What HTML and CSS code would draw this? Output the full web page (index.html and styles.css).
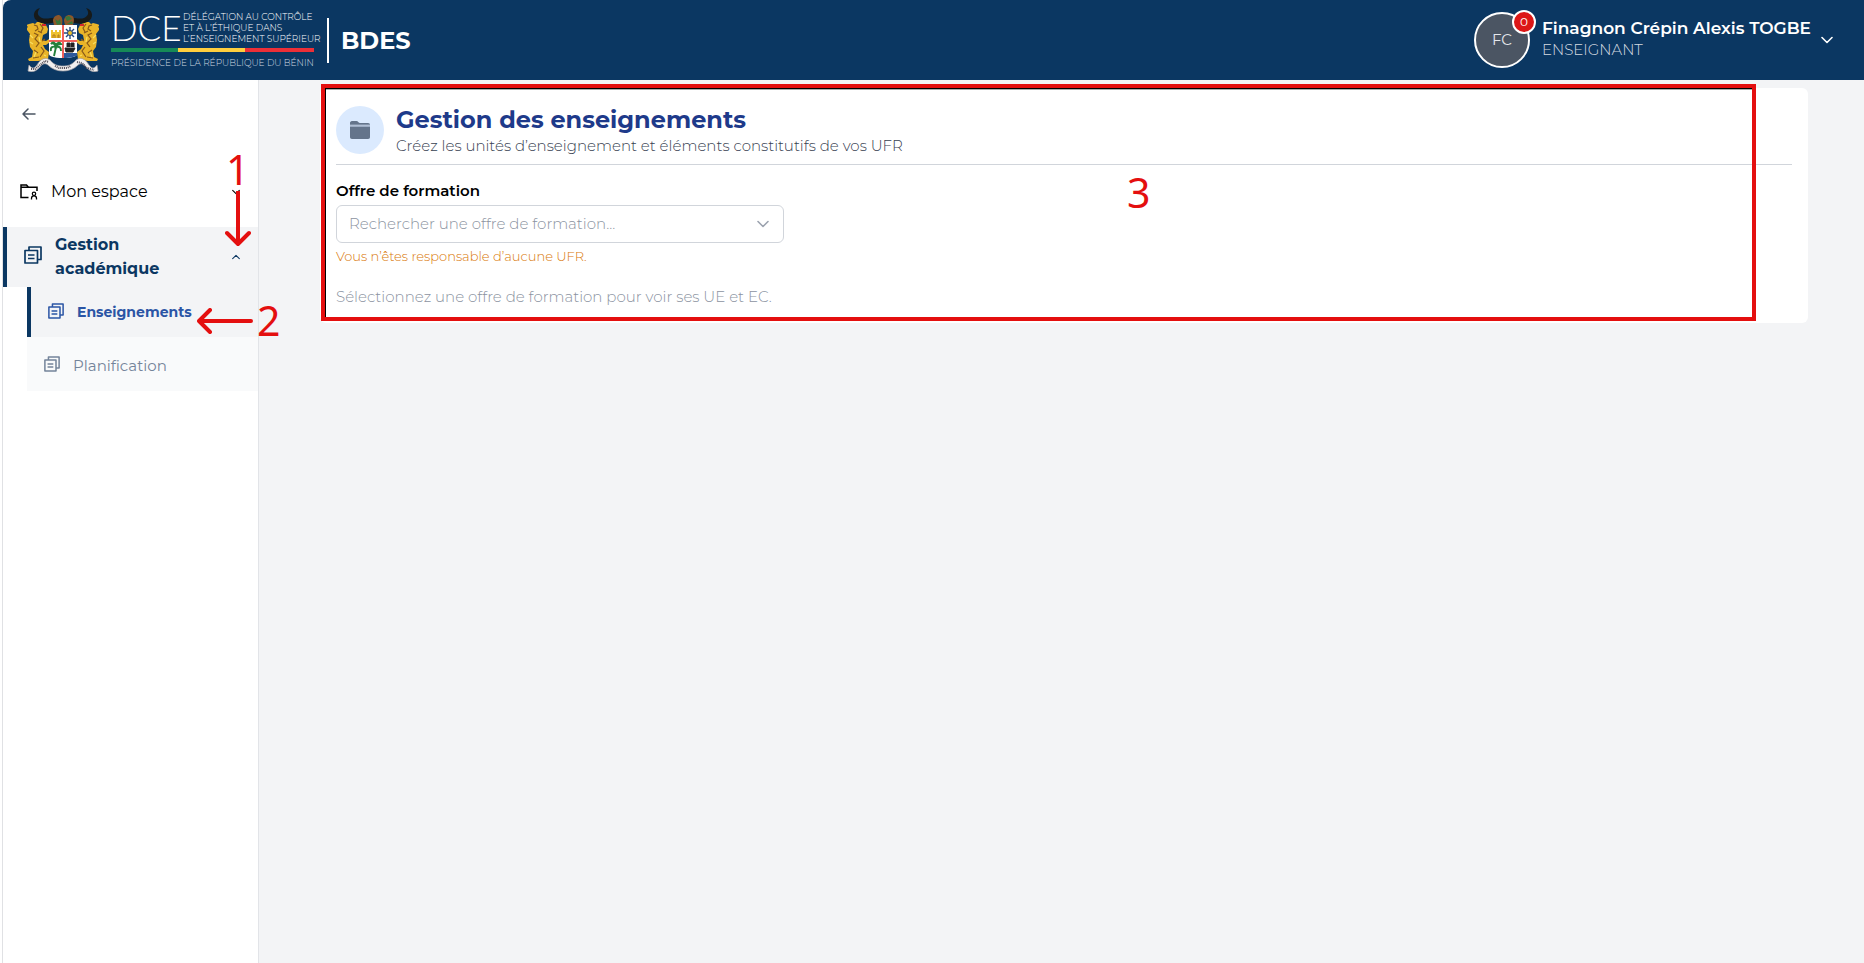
FILE: index.html
```html
<!DOCTYPE html>
<html lang="fr">
<head>
<meta charset="utf-8">
<title>BDES - Gestion des enseignements</title>
<link rel="stylesheet" href="styles.css">
</head>
<body>
<svg class="defs" width="0" height="0" aria-hidden="true">
  <defs>
    <symbol id="copies" viewBox="0 0 18 18">
      <path d="M1 4.500h12.500V17H1zM5 4V1h12v12.500h-3M4 9h6.500M4 12.500h6.500" fill="none" stroke="currentColor" stroke-width="1.700" stroke-linejoin="round"/>
    </symbol>
    <symbol id="chevron" viewBox="0 0 12 8">
      <path d="M1 1.500l5 5 5-5" fill="none" stroke="currentColor" stroke-width="1.600" stroke-linecap="round" stroke-linejoin="round"/>
    </symbol>
    <g id="lion">
      <path d="M2 16l4-1 2 1 2-2 5 0 4 3 2 4-1 4-4 2-1 5 4 1 3-2 1 3-4 3-3 0 2 4 4 3-1 7-4 1-6 1-9 0-1-2 4-2 1-6-3-4-1-7 1-6-3-4-2 1 0-2 3-2-2-2z" fill="#e9b429"/>
      <path d="M7 17l3 1 1 3-3 2M13 16l3 4-2 4M7 25l4 2-3 4 4 4-3 4M14 39l3 4-4 6M6 50l6-1M18 31l-3 2M11 23l4 2M7 42l4 3" fill="none" stroke="#87591a" stroke-width="1.200"/>
      <path d="M3 27l3 3M3 34l3 2M9 44l-2 5M12 29l1 5M17 47l2 1" fill="none" stroke="#f7df62" stroke-width="1.200"/>
      <path d="M15 16h4v2h-4z" fill="#d5282b"/>
    </g>
  </defs>
</svg>
<div class="app">
  <header class="topbar">
    <div class="brand">
      <svg class="emblem" viewBox="0 0 72 64" role="img" aria-label="Armoiries du Bénin">
        <use href="#lion"/>
        <use href="#lion" transform="translate(72 0) scale(-1 1)"/>
        <path d="M13 0C7 1 5 8 9 12c5 5 13 4 19 2l5 3 1-7c-6-2-14 2-19 0-4-2-6-5-2-10z" fill="#171a19"/>
        <path d="M59 0c6 1 8 8 4 12-5 5-13 4-19 2l-5 3-1-7c6-2 14 2 19 0 4-2 6-5 2-10z" fill="#171a19"/>
        <path d="M26 13c0-4 3-6 6-6 3 1 4 4 3 10h-8zM37 13c0-4 3-6 5-6 5 0 6 4 4 10h-8z" fill="#8d572a"/>
        <path d="M28 11l3 2 2-2 1 5-4 1zM38 9l4-1 3 3-5 2M40 16l5-3 1 3z" fill="#38763a"/>
        <path d="M22 17h28v29c0 2-4 4-14 4s-14-2-14-4z" fill="#fff"/>
        <path d="M36 17v33M22 33h28" stroke="#f0605c" stroke-width="2"/>
        <path d="M24 22h2v2h2v-2h2v2h2v-2h2v8H24z" fill="#eec22e"/>
        <path d="M26 30v-3h2v3M31 30v-3h1v3" stroke="#b57a18" fill="none"/>
        <path d="M43 19v12M37 25h12M39 21l8 8M47 21l-8 8" stroke="#254b83" stroke-width="1.400"/>
        <circle cx="43" cy="25" r="2.500" fill="#eec22e" stroke="#254b83"/>
        <path d="M29 39l-2 9M24 43c-1-4 2-5 5-4-1-4-4-4-5-3 2-3 5-1 5 2 1-4 4-4 5-2-3 0-4 1-5 3 4-1 5 1 5 4" fill="none" stroke="#24803b" stroke-width="1.900"/>
        <path d="M38 40h10l-2 4h-7zM40 39v-4h3v4M44 39v-4h3v4" fill="#222" stroke="#222"/>
        <path d="M37 45h13v2c-2 2-7 3-13 3z" fill="#2d599c"/>
        <path d="M2 57c3 4 5 4 8 0 4-7 9-8 13-5 4 5 8 6 13 6s9-1 13-6c4-3 9-2 13 5 3 4 5 4 8 0l1 6c-4 2-8 0-11-3-4-5-6-5-9-3-4 4-9 6-15 6s-11-2-15-6c-3-2-5-2-9 3-3 3-7 5-11 3z" fill="#f2f0ef" stroke="#a09da4" stroke-width=".7"/>
        <path d="M4 61l4 0 5-4 5-4 4 1M28 58l4 2 8 0 4-2M50 54l5 1 5 5 7 2" fill="none" stroke="#57525c" stroke-width="2" stroke-dasharray="1 .9"/>
      </svg>
      <div class="dce">
        <div class="dce-top">
          <span class="dce-name">DCE</span>
          <span class="dce-lines">DÉLÉGATION AU CONTRÔLE<br>ET À L’ÉTHIQUE DANS<br>L’ENSEIGNEMENT SUPÉRIEUR</span>
        </div>
        <div class="flag"></div>
        <span class="presidency">PRÉSIDENCE DE LA RÉPUBLIQUE DU BÉNIN</span>
      </div>
      <span class="app-name">BDES</span>
    </div>
    <button class="account" type="button">
      <span class="avatar">FC<span class="badge">0</span></span>
      <span class="who"><strong>Finagnon Crépin Alexis TOGBE</strong><span class="role">ENSEIGNANT</span></span>
      <svg class="chev" viewBox="0 0 12 8"><use href="#chevron"/></svg>
    </button>
  </header>
  <div class="body">
    <nav class="sidebar" aria-label="Navigation">
      <button class="back" type="button" aria-label="Réduire">
        <svg width="14" height="12" viewBox="0 0 14 12"><path d="M6 1L1 6l5 5M1 6h12" fill="none" stroke="currentColor" stroke-width="1.500" stroke-linecap="round" stroke-linejoin="round"/></svg>
      </button>
      <button class="group" type="button">
        <svg class="folder-user" viewBox="0 0 18 16"><path d="M8.500 13.500H1V1h5.500l2 2.200H17V7M1 3.200h7" fill="none" stroke="currentColor" stroke-width="1.500"/><circle cx="14" cy="9.800" r="1.700" fill="none" stroke="currentColor" stroke-width="1.200"/><path d="M11.500 15.500v-1.300c0-3 5-3 5 0v1.300" fill="none" stroke="currentColor" stroke-width="1.300"/></svg>
        <span class="label">Mon espace</span>
        <svg class="chev small" viewBox="0 0 12 8"><use href="#chevron"/></svg>
      </button>
      <button class="group open" type="button" aria-expanded="true">
        <svg class="copies"><use href="#copies"/></svg>
        <span class="label">Gestion académique</span>
        <svg class="chev small up" viewBox="0 0 12 8"><use href="#chevron"/></svg>
      </button>
      <div class="sub">
        <a class="item current" href="#"><svg class="copies"><use href="#copies"/></svg>Enseignements</a>
        <a class="item" href="#"><svg class="copies"><use href="#copies"/></svg>Planification</a>
      </div>
      <span class="mark one">1</span>
      <svg class="arrow-down" viewBox="0 0 26 56"><path d="M13 1v50M2 42l11 11 11-11" fill="none" stroke="currentColor" stroke-width="4" stroke-linecap="round" stroke-linejoin="round"/></svg>
      <svg class="arrow-left" viewBox="0 0 56 26"><path d="M54 13H3M13 2L2 13l11 11" fill="none" stroke="currentColor" stroke-width="4" stroke-linecap="round" stroke-linejoin="round"/></svg>
      <span class="mark two">2</span>
    </nav>
    <main class="main">
      <section class="card">
        <div class="card-head">
          <span class="disc"><svg width="22" height="20" viewBox="0 0 22 20"><path d="M1 4.800V3c0-1 .7-2 2-2h4.500c1.500 0 2 2 3.500 2h8c1.300 0 2 .7 2 1.800z" fill="currentColor"/><path d="M1 6.500h20V17c0 1.300-.7 2-2 2H3c-1.300 0-2-.7-2-2z" fill="currentColor"/><path d="M1 5.600h20" stroke="currentColor" stroke-opacity=".4"/></svg></span>
          <div>
            <h1>Gestion des enseignements</h1>
            <p class="subtitle">Créez les unités d’enseignement et éléments constitutifs de vos UFR</p>
          </div>
        </div>
        <label class="field-label" for="offre">Offre de formation</label>
        <div class="combo">
          <input id="offre" type="text" placeholder="Rechercher une offre de formation...">
          <svg class="chev" viewBox="0 0 12 8"><use href="#chevron"/></svg>
        </div>
        <p class="warning">Vous n’êtes responsable d’aucune UFR.</p>
        <p class="empty">Sélectionnez une offre de formation pour voir ses UE et EC.</p>
        <div class="frame"></div>
        <span class="mark three">3</span>
      </section>
    </main>
  </div>
</div>
</body>
</html>
```
FILE: styles.css
```css
* { box-sizing: border-box; }
body {
  margin: 0;
  background: #fff;
  color: #000;
  font: 15px/20px Montserrat, Inter, "Liberation Sans", sans-serif;
}
h1, p { margin: 0; }
button { margin: 0; border: 0; background: none; color: inherit; font: inherit; text-align: left; cursor: pointer; }
svg { flex: none; }
.defs { display: block; position: absolute; }
.app {
  display: flex;
  flex-direction: column;
  min-height: 100vh;
  margin-left: 2px;
  border-left: 1px solid #e0e1e4;
}

.topbar {
  display: flex;
  align-items: center;
  justify-content: space-between;
  height: 80px;
  padding: 0 31px 0 24px;
  border-top-left-radius: 8px;
  background: #0b3762;
  color: #fff;
}
.brand { display: flex; align-items: center; }
.emblem { width: 72px; height: 64px; }
.dce { width: 203px; margin: 0 13px 0 12px; }
.dce-top { display: flex; justify-content: space-between; align-items: center; height: 36px; }
.dce-name { font: 300 35px/36px Lato, sans-serif; }
.dce-lines { width: 131px; font-size: 9px; font-weight: 300; line-height: 11px; white-space: nowrap; }
.flag {
  height: 4px;
  margin: 3px 0 3px;
  background: linear-gradient(90deg, #168a57 33%, #ffce3e 33% 66%, #ec2f37 66%);
}
.presidency { display: block; font-size: 9px; font-weight: 300; line-height: 16px; color: #d0d8e0; white-space: nowrap; }
.app-name {
  padding-left: 12px;
  border-left: 2px solid #fff;
  font-size: 24px;
  font-weight: 700;
  line-height: 45px;
}
.account { display: flex; align-items: center; padding: 0; }
.avatar {
  position: relative;
  width: 56px;
  height: 56px;
  margin-right: 12px;
  border: 2px solid #fff;
  border-radius: 50%;
  background: #4b5563;
  color: #e5e7eb;
  line-height: 52px;
  text-align: center;
}
.badge {
  position: absolute;
  top: -4px;
  right: -8px;
  width: 24px;
  height: 24px;
  border: 2px solid #fff;
  border-radius: 50%;
  background: #dc1717;
  color: #fff;
  font-size: 12px;
  line-height: 20px;
}
.who { display: flex; flex-direction: column; margin-top: -5px; }
.who strong { font-size: 17px; font-weight: 600; line-height: 24px; }
.role { font-size: 15px; font-weight: 300; line-height: 20px; color: #d5dae0; }
.chev { width: 12px; height: 8px; }
.account .chev { margin-left: 10px; }

.body { display: flex; flex: 1; }
.sidebar {
  position: relative;
  flex: none;
  width: 256px;
  border-right: 1px solid #e2e4e8;
  background: #fff;
}
.back { display: flex; margin: 22px 0 31px 13px; padding: 6px; color: #4b5563; }
.group {
  display: flex;
  align-items: center;
  width: 100%;
  height: 70px;
  padding: 0 18px 0 17px;
  font-size: 16px;
  line-height: 24px;
}
.group .label { flex: 1; margin-left: 13px; }
.folder-user { width: 18px; height: 16px; }
.chev.small { width: 8px; height: 6px; }
.chev.up { transform: rotate(180deg); }
.copies { width: 18px; height: 18px; }
.group.open {
  height: 60px;
  border-left: 4px solid #0b3762;
  background: #f3f4f6;
  color: #0b3762;
  font-weight: 700;
}
.group.open .copies { margin-bottom: 4px; }
.group.open .label { padding-right: 60px; }
.sub { margin-left: 24px; background: #f9fafb; }
.item {
  display: flex;
  align-items: center;
  gap: 13px;
  height: 54px;
  padding-top: 3px;
  padding-left: 17px;
  color: #74849a;
  font-size: 15px;
  text-decoration: none;
}
.item .copies { width: 16px; height: 16px; margin-bottom: 3px; }
.item.current {
  height: 50px;
  padding-top: 0;
  border-left: 4px solid #0b3762;
  background: #f3f4f6;
  color: #2b55a5;
  font-size: 14px;
  font-weight: 700;
}

.main { flex: 1; padding: 8px 56px 0 61px; background: #f3f4f6; }
.card { position: relative; padding: 16px; border-radius: 6px; background: #fff; }
.card-head {
  display: flex;
  align-items: center;
  gap: 12px;
  height: 61px;
  padding-bottom: 8px;
  border-bottom: 1px solid #d1d5db;
}
.disc {
  display: grid;
  place-items: center;
  width: 48px;
  height: 48px;
  border-radius: 50%;
  background: #dbeafe;
  color: #64748b;
}
h1 { color: #1e3a8a; font-size: 24px; font-weight: 700; line-height: 32px; }
.subtitle { color: #374151; font-size: 15px; font-weight: 300; }
.field-label { display: block; margin-top: 16px; font-weight: 600; font-size: 15px; }
.combo {
  display: flex;
  align-items: center;
  width: 448px;
  height: 38px;
  margin-top: 4px;
  padding: 0 14px 0 12px;
  border: 1px solid #d1d5db;
  border-radius: 6px;
  color: #9ca3af;
}
.combo input { flex: 1; min-width: 0; padding: 0; border: 0; outline: 0; background: none; font: inherit; font-weight: 300; }
.combo input::placeholder { color: #8b93a1; opacity: 1; }
.warning { margin-top: 3px; color: #d97706; font-size: 13px; font-weight: 300; }
.empty { padding: 21px 0 0; color: #8b93a1; font-size: 15px; font-weight: 300; }

.frame {
  position: absolute;
  inset: -4px 52px 2px 1px;
  border: 4px solid #e40f0f;
  box-shadow: inset 1px 1px #000, inset 0 2px #aaa;
}
.mark { position: absolute; color: #e40f0f; font: 41px/48px "Noto Sans", sans-serif; }
.one { top: 65px; left: 223px; }
.two { top: 216px; left: 254px; z-index: 1; }
.three { top: 80px; left: 807px; }
.arrow-down { position: absolute; top: 111px; left: 222px; width: 26px; height: 56px; color: #e40f0f; }
.arrow-left { position: absolute; top: 228px; left: 194px; width: 56px; height: 26px; color: #e40f0f; }
```
